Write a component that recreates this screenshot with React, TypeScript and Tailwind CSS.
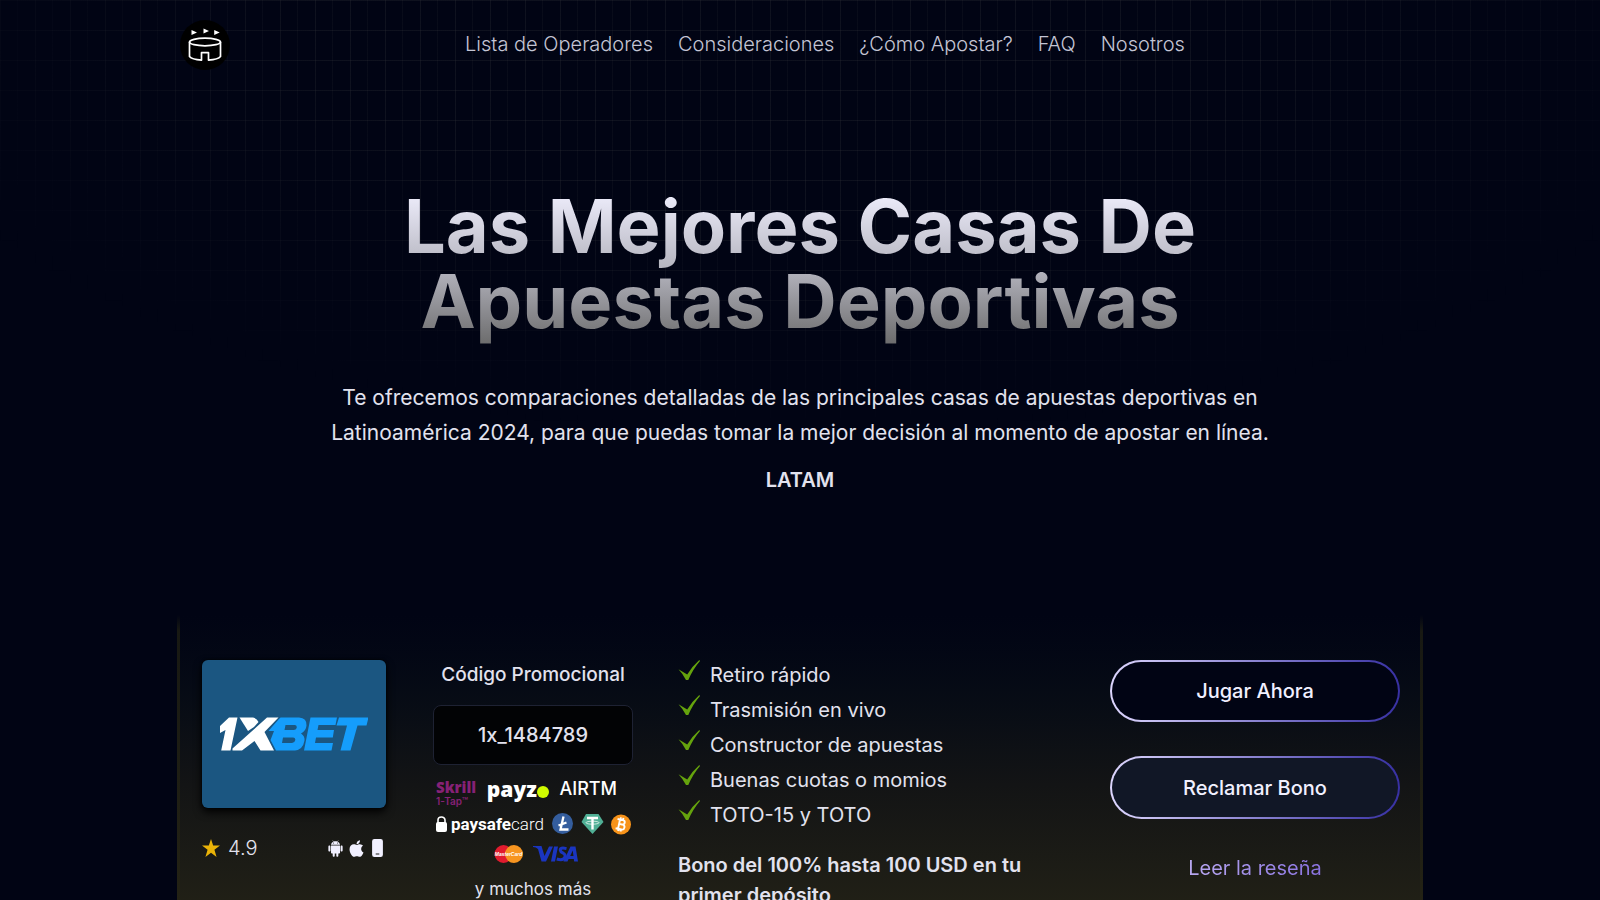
import { AiFillAndroid } from "react-icons/ai";
import { FaApple } from "react-icons/fa";

const NAV = ["Lista de Operadores", "Consideraciones", "¿Cómo Apostar?", "FAQ", "Nosotros"];
const FEATURES = [
  "Retiro rápido",
  "Trasmisión en vivo",
  "Constructor de apuestas",
  "Buenas cuotas o momios",
  "TOTO-15 y TOTO",
];

function Logo() {
  return (
    <svg viewBox="0 0 50 50" className="size-[50px]" role="img" aria-label="Inicio">
      <circle cx="25" cy="25" r="25" fill="#000" />
      <g fill="none" stroke="#fff" strokeWidth="1.7" strokeLinejoin="round">
        <ellipse cx="25" cy="22" rx="15.500" ry="3.800" />
        <path d="M9.500 22v14.500c1.500 1.900 6 3.200 12 3.600v-7.400h7v7.400c6-.4 10.500-1.700 12-3.600V22" />
      </g>
      <path fill="#fff" d="M11.500 10l5.500 2.500-5.500 2.500zM23.500 8.500l5.500 2.500-5.500 2.500zM34.200 10l5.500 2.500-5.500 2.500z" />
    </svg>
  );
}

function BrandLogo() {
  return (
    <svg viewBox="0 0 148 34" className="w-[148px]" role="img" aria-label="1XBET">
      <g fill="#fff">
        <path d="M0 16V9L9 0.500h8.500L10.500 33.500H1.200L5.500 13z" />
        <path d="M19.500 0.500H33q4 1 5.500 4.500L34 10l-6 4z" />
        <path d="M58.500 0.500H47L12.500 31.500V33.500H22L34.500 24l6 9.500h13.500L44.500 15z" />
      </g>
      <path
        fill="#159dfc"
        fillRule="evenodd"
        d="M58.500 2.500L60.500 0.500H79Q87 1 86.500 8.500Q86 14 81 16.500Q85 19 84.500 23.500Q83 32.500 75 33.500H56L50.500 23L54 14H48.500zM65.500 8L64.500 13H74Q76.500 12.500 76.800 10.500Q77 8 75 8zM63 20.500L62 26H72Q75 25.500 75.300 23Q75.500 20.500 73 20.500z"
      />
      <path fill="#159dfc" d="M90.500 0.500H117L115.500 8H98.500L97.500 13H114L112.800 20.500H96L95 26H113L111.500 33.500H84z" />
      <path fill="#159dfc" d="M119 0.500h29.500L146.500 8.500H137.500L130.500 33.500H120.500L127 8.500H116.500z" />
    </svg>
  );
}

function PhoneIcon() {
  return (
    <svg viewBox="0 0 12 20" className="h-[18px] w-[11px]" aria-hidden="true">
      <path
        fill="#f1f0ff"
        fillRule="evenodd"
        d="M2.500 0h7A2.500 2.500 0 0 1 12 2.500v15A2.500 2.500 0 0 1 9.500 20h-7A2.500 2.500 0 0 1 0 17.500v-15A2.500 2.500 0 0 1 2.500 0zM4 16v1.200h4V16z"
      />
    </svg>
  );
}

function Check() {
  return (
    <svg viewBox="0 0 22 20" className="h-5 w-[22px]" aria-hidden="true">
      <path fill="#65a30d" d="M0.500 9.200L9.200 14.500Q14.500 6 21.300 0L22 1Q15 9 10.300 20H8Q5 14 0.500 9.200z" />
    </svg>
  );
}

function Payments() {
  return (
    <div className="flex w-full flex-wrap items-center justify-center gap-y-[6px] text-white">
      <div className="flex w-full items-start justify-between pr-4 pl-[3px]">
        <span className="flex flex-col text-[#862175]">
          <span className="font-['Open_Sans',sans-serif] text-[15px] leading-[15px] font-extrabold">Skrill</span>
          <span className="font-['Inter',sans-serif] text-[10px] leading-[12px] font-semibold">1-Tap™</span>
        </span>
        <span className="flex items-end">
          <span className="font-['Open_Sans',sans-serif] text-[21px] leading-[18px] font-extrabold">payz</span>
          <span className="size-3 rounded-full bg-[#d0fb00]" />
        </span>
        <span className="font-['Inter',sans-serif] text-[18px] leading-[18px] font-medium">AIRTM</span>
      </div>
      <div className="flex w-full items-center justify-between pr-[2px] pl-[3px]">
        <span className="flex items-center gap-1">
          <svg viewBox="0 0 11 17" className="h-[17px] w-[11px]" aria-hidden="true">
            <path d="M2 7V4a3.500 3 0 0 1 7 0v3" fill="none" stroke="#fff" strokeWidth="1.600" />
            <rect y="6" width="11" height="10" rx="2" fill="#fff" />
          </svg>
          <span className="font-['Roboto',sans-serif] text-[17px] leading-5 font-bold">
            paysafe<span className="font-light">card</span>
          </span>
        </span>
        <svg viewBox="0 0 79 22" className="h-[22px] w-[79px]" role="img" aria-label="Litecoin, Tether, Bitcoin">
          <circle cx="10.500" cy="10.500" r="10.500" fill="#345d9d" />
          <path d="M11.500 3.500L8.500 16.500h8M6.500 12.500l8-3" fill="none" stroke="#fff" strokeWidth="2.300" />
          <path d="M34 1h12.500l5 8L40.500 21 29.500 9z" fill="#50af95" />
          <path d="M35 5h11M40.500 5v11.500" fill="none" stroke="#fff" strokeWidth="2.400" />
          <ellipse cx="40.500" cy="9.700" rx="6.500" ry="1.500" fill="none" stroke="#fff" strokeWidth=".7" />
          <circle cx="69" cy="11.500" r="10" fill="#f7931a" />
          <g transform="rotate(12 69 11.500)" fill="none" stroke="#fff" strokeWidth="1.900">
            <path d="M67 6.500v10M64.500 6.800h5.500a2.200 2.200 0 0 1 0 4.500h-3h3.500a2.500 2.500 0 0 1 0 5h-6M67.500 4.500v2M70 4.500v2M67.500 16.500v2M70 16.500v2" />
          </g>
        </svg>
      </div>
      <div className="mt-[4px] flex w-full justify-center pl-[5px]">
        <svg viewBox="0 0 84 18" className="h-[18px] w-[84px]" role="img" aria-label="MasterCard, Visa">
          <circle cx="9.500" cy="9" r="9" fill="#e11b2e" />
          <circle cx="20" cy="9" r="9" fill="#f79520" />
          <text x="14.500" y="11" textAnchor="middle" fill="#fff" fontFamily="Liberation Sans" fontSize="5" fontWeight="700" fontStyle="italic">MasterCard</text>
          <path fill="#1a35c0" d="M39 1h8.500l3 10L55 1.500h4L52 16.500h-4.500L44 4Q42 2 39 2zM60 1.500h4l-3 15h-4zM76.500 1.500h5l2.500 15h-3.800l-.4-2.500h-5.200l-1.100 2.500h-4zM78.700 5.500l-2.500 5.500h3.300z" />
          <path d="M72.500 3.600Q66 2 66.300 5.300Q66.500 7 69 8Q72 9.500 70.800 12.500Q69 16 62.800 14" fill="none" stroke="#1a35c0" strokeWidth="3" />
        </svg>
      </div>
    </div>
  );
}

export default function App() {
  return (
    <div className="relative h-screen overflow-hidden bg-[#010414] font-['Inter',sans-serif] text-[20px] text-[#e2e2ee]">
      <div
        aria-hidden="true"
        className="absolute inset-x-0 top-0 h-[480px] bg-[linear-gradient(to_right,#4f4f4f30_1px,transparent_1px,transparent_17px,#4f4f4f1c_17px,#4f4f4f1c_18px,transparent_18px),linear-gradient(to_bottom,#4f4f4f2e_1px,transparent_1px)] bg-[size:35px_30px] [mask-image:radial-gradient(ellipse_960px_440px_at_50%_0%,#000_50%,transparent_100%)]"
      />
      <div className="relative mx-auto max-w-[1240px]">
        <header className="flex items-center pt-5">
          <a href="#inicio"><Logo /></a>
          <nav className="flex flex-1 justify-center gap-[25px] pb-[2px] font-light text-[#c4c5d4]">
            {NAV.map((item) => (
              <a key={item} href="#seccion" className="leading-7">{item}</a>
            ))}
          </nav>
        </header>

        <section className="flex flex-col items-center pt-[119px] text-center">
          <h1 className="max-w-[900px] bg-linear-to-b from-[#f1f0ff] via-[#b4b4be] via-50% to-[#666666] bg-clip-text pb-3 text-[74px] leading-[75px] font-bold text-transparent">
            Las Mejores Casas De Apuestas Deportivas
          </h1>
          <p className="mt-[29px] max-w-[960px] text-[21px] leading-[35px]">
            Te ofrecemos comparaciones detalladas de las principales casas de apuestas deportivas en Latinoamérica 2024, para que puedas tomar la mejor decisión al momento de apostar en línea.
          </p>
          <p className="mt-4 leading-7 font-semibold">LATAM</p>
        </section>
      </div>

      <div className="relative mx-auto mt-[121px] max-w-[1246px] bg-linear-to-b from-transparent via-[#181913] via-[16px] to-[#242315] to-[300px] px-[3px]">
        <article className="flex min-h-[420px] items-start bg-linear-to-b from-[#010414] via-[#131415] via-[170px] to-[#222116] to-[300px] pt-[45px] pr-5 pl-[22px]">
          <div className="w-[184px] shrink-0">
            <div className="flex h-[148px] items-center justify-center rounded-md bg-[#1b5681] shadow-[0_4px_8px_#000,0_0_3px_#000]">
              <BrandLogo />
            </div>
            <div className="mt-[26px] flex items-center">
              <svg viewBox="0 0 20 20" className="size-[18px]" aria-hidden="true">
                <path fill="#eab308" d="M10 0l2.400 7.300H20l-6.200 4.700 2.400 8L10 15.300 3.800 20l2.400-8L0 7.300h7.600z" />
              </svg>
              <span className="ml-2 leading-7 font-light">4.9</span>
              <span className="mr-[3px] ml-auto flex items-center gap-[2px] text-[#f1f0ff]">
                <AiFillAndroid size={19} />
                <FaApple size={19} />
                <span className="ml-1"><PhoneIcon /></span>
              </span>
            </div>
          </div>

          <div className="ml-[47px] flex w-[200px] shrink-0 flex-col items-center">
            <h2 className="text-[19px] leading-[30px] font-medium whitespace-nowrap">Código Promocional</h2>
            <button type="button" className="my-[15px] h-[60px] w-full rounded-lg border border-[#1e2233] bg-[#020305] font-medium">
              1x_1484789
            </button>
            <Payments />
            <p className="mt-3 text-[17px] leading-7">y muchos más</p>
          </div>

          <div className="ml-[45px] flex-1">
            <ul>
              {FEATURES.map((item) => (
                <li key={item} className="flex h-[35px] items-start gap-[10px]">
                  <Check />
                  <span className="leading-[30px]">{item}</span>
                </li>
              ))}
            </ul>
            <p className="mt-[15px] max-w-[350px] leading-[30px] font-semibold">
              Bono del 100% hasta 100 USD en tu primer depósito
            </p>
          </div>

          <div className="flex w-[290px] shrink-0 flex-col items-center font-medium text-[#f1f0ff]">
            <button type="button" className="h-[62px] w-full rounded-full border-2 border-transparent bg-[linear-gradient(#010414,#010414),linear-gradient(to_right,#ddd6fe,#3730a3)] [background-clip:padding-box,border-box] [background-origin:border-box]">
              Jugar Ahora
            </button>
            <button type="button" className="mt-[34px] h-[63px] w-full rounded-full border-2 border-transparent bg-[linear-gradient(#111726,#111726),linear-gradient(to_right,#ddd6fe,#3730a3)] [background-clip:padding-box,border-box] [background-origin:border-box]">
              Reclamar Bono
            </button>
            <a href="#resena" className="mt-[35px] bg-linear-to-r from-[#b9a8f0] to-[#8a72e0] bg-clip-text leading-7 font-normal text-transparent">
              Leer la reseña
            </a>
          </div>
        </article>
      </div>
    </div>
  );
}
